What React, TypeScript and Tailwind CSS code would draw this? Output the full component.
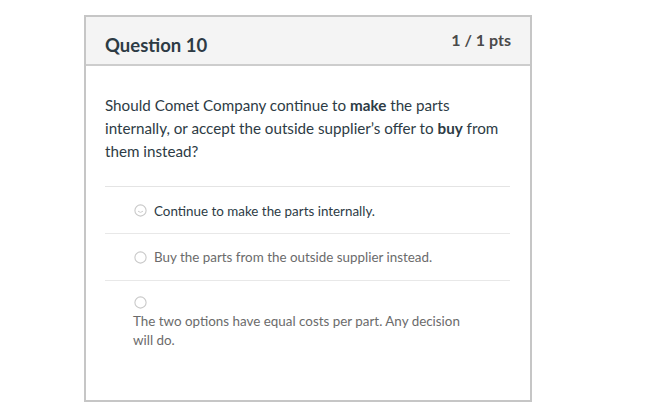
const font = { fontFamily: 'Lato, "Open Sans", sans-serif' };

function Radio({ smile = false }: { smile?: boolean }) {
  return (
    <svg width="13" height="13" viewBox="0 0 13 13" className="shrink-0">
      <circle cx="6.5" cy="6.5" r="5.6" fill="#fff" stroke="#c9c9c9" strokeWidth="1.1" />
      {smile && <path d="M4 7.2 Q6.5 9.6 9 7.2" fill="none" stroke="#cfcfcf" strokeWidth="1" />}
    </svg>
  );
}

export default function App() {
  return (
    <div className="w-[653px] h-[407px] bg-white overflow-hidden" style={font}>
      <div className="ml-[84px] mt-[15px] w-[448px] h-[387px] border-2 border-[#c6c6c6] bg-white flex flex-col">
        {/* Header */}
        <div className="h-[49px] shrink-0 bg-[#f4f4f4] border-b-2 border-[#cdcdcd] flex justify-between pl-[19px] pr-[19px]">
          <h2 className="text-[18.5px] font-bold text-[#2d3b45] mt-[16px] leading-[24px]">Question 10</h2>
          <div className="text-[16px] font-bold text-[#4a4a4a] mt-[12px] leading-[22px]">1 / 1 pts</div>
        </div>

        {/* Body */}
        <div className="pl-[19px] pr-[20px] pt-[28px]">
          <p className="text-[15.2px] leading-[23px] text-[#2d3b45] w-[402px]">
            Should Comet Company continue to <b>make</b> the parts internally, or accept the outside supplier’s offer to <b>buy</b> from them instead?
          </p>

          <div className="mt-[23px] border-t border-[#e4e4e4]">
            <div className="h-[47px] border-b border-[#e8e8e8] flex items-center pl-[29px] gap-[7px]">
              <Radio smile />
              <span className="text-[13.4px] text-[#2d3b45] mt-[2px]">Continue to make the parts internally.</span>
            </div>
            <div className="h-[47px] border-b border-[#e8e8e8] flex items-center pl-[29px] gap-[7px]">
              <Radio />
              <span className="text-[13.4px] text-[#6b6b6b] mt-[1px]">Buy the parts from the outside supplier instead.</span>
            </div>
            <div className="pt-[15px] pl-[28px]">
              <div className="pl-[1px]">
                <Radio />
              </div>
              <p className="text-[13.4px] leading-[19px] text-[#6b6b6b] mt-[3px] w-[340px]">
                The two options have equal costs per part. Any decision will do.
              </p>
            </div>
          </div>
        </div>
      </div>
    </div>
  );
}
